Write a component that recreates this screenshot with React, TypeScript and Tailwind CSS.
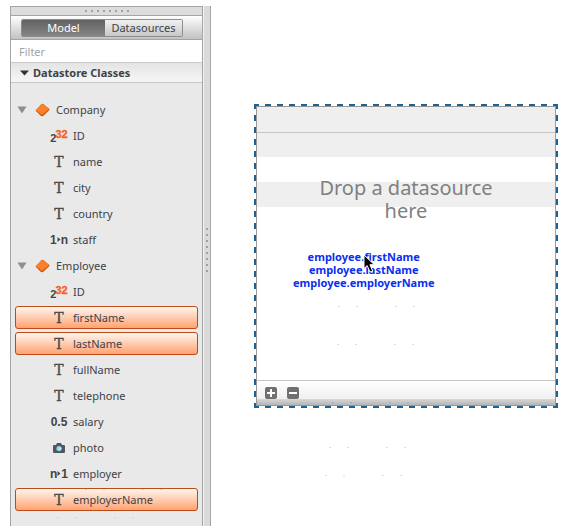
import { useState } from "react";

type Kind = "id" | "text" | "toMany" | "toOne" | "number" | "image";
type Field = { name: string; kind: Kind };
type Entity = { name: string; fields: Field[] };

const entities: Entity[] = [
  {
    name: "Company",
    fields: [
      { name: "ID", kind: "id" },
      { name: "name", kind: "text" },
      { name: "city", kind: "text" },
      { name: "country", kind: "text" },
      { name: "staff", kind: "toMany" },
    ],
  },
  {
    name: "Employee",
    fields: [
      { name: "ID", kind: "id" },
      { name: "firstName", kind: "text" },
      { name: "lastName", kind: "text" },
      { name: "fullName", kind: "text" },
      { name: "telephone", kind: "text" },
      { name: "salary", kind: "number" },
      { name: "photo", kind: "image" },
      { name: "employer", kind: "toOne" },
      { name: "employerName", kind: "text" },
    ],
  },
];

const dragged = ["firstName", "lastName", "employerName"];

function Arrow() {
  return (
    <svg width="4" height="5" viewBox="0 0 4 5" className="shrink-0">
      <path d="M0.5 0L3.5 2.5L0.5 5Z" fill="#444" />
    </svg>
  );
}

function KindIcon({ kind }: { kind: Kind }) {
  if (kind === "image") {
    return (
      <svg width="12" height="10" viewBox="0 0 12 10">
        <path d="M1 2H3L4 0H8L9 2H11Q12 2 12 3V9Q12 10 11 10H1Q0 10 0 9V3Q0 2 1 2Z" fill="#55565c" />
        <circle cx="6" cy="5.5" r="2.6" fill="#8fd6f2" />
        <circle cx="7" cy="5.5" r="1.2" fill="#c4ecfb" />
      </svg>
    );
  }
  if (kind === "text") {
    return <span className="font-['DejaVu_Serif',serif] text-[14px] leading-4 text-[#4a4a4a] [-webkit-text-stroke:0.4px_#4a4a4a]">T</span>;
  }
  return (
    <span className="flex items-center font-['Liberation_Sans',sans-serif] text-[12px] leading-4 font-bold text-[#444]">
      {kind === "number" && "0.5"}
      {kind === "id" && (
        <>
          <span className="pt-1 text-[11px] leading-3">2</span>
          <span className="-ml-px pb-1 text-[11px] leading-3 text-[#f2622d] [-webkit-text-stroke:0.3px_#f2622d]">32</span>
        </>
      )}
      {kind === "toMany" && (
        <>
          1<Arrow />n
        </>
      )}
      {kind === "toOne" && (
        <>
          n<Arrow />1
        </>
      )}
    </span>
  );
}

function EntityIcon() {
  return (
    <svg width="15" height="14" viewBox="0 0 15 14">
      <path d="M0.6 7.8L6.6 1L8 0.8L14.3 6L14.2 7.2L7.8 13.2L6 13Z" fill="#c4570f" />
      <path d="M0.6 7L7.4 0.8L14 6L7 12Z" fill="#ff7f27" />
    </svg>
  );
}

function FieldRow({ field }: { field: Field }) {
  const selected = dragged.includes(field.name);
  return (
    <li>
      <button
        type="button"
        aria-pressed={selected}
        className={`flex h-[23px] w-full items-center gap-[6px] rounded-[3px] border pl-[35px] text-left ${
          selected ? "border-[#bd4b18] bg-linear-to-b from-[#fff5ee] to-[#ffa270]" : "border-transparent"
        }`}
      >
        <span className="flex w-4 shrink-0 items-center justify-center">
          <KindIcon kind={field.kind} />
        </span>
        {field.name}
      </button>
    </li>
  );
}

function EntityGroup({ entity }: { entity: Entity }) {
  const [open, setOpen] = useState(true);
  return (
    <li className="flex flex-col gap-[3px]">
      <button
        type="button"
        aria-expanded={open}
        onClick={() => setOpen(!open)}
        className="flex h-[23px] w-full items-center gap-[6px] pl-[2px] text-left"
      >
        <svg width="10" height="8" viewBox="0 0 10 8" className="mr-[2px]">
          <path d="M0.5 0.5H9.5L5 7.5Z" fill="#8e8e8e" />
        </svg>
        <EntityIcon />
        {entity.name}
      </button>
      {open && (
        <ul className="flex flex-col gap-[3px]">
          {entity.fields.map((field) => (
            <FieldRow key={field.name} field={field} />
          ))}
        </ul>
      )}
    </li>
  );
}

const tabs = [
  { name: "Model", width: "w-[83px]" },
  { name: "Datasources", width: "flex-1" },
];

function Sidebar() {
  const [tab, setTab] = useState("Model");
  return (
    <aside className="w-[193px] shrink-0 border border-b-0 border-[#a5a5a5] bg-[#e9e9e9]">
      <div className="flex h-2 items-center justify-center gap-1 bg-[#dcdcdc]">
        {Array.from({ length: 8 }, (_, i) => (
          <span key={i} className="size-[2px] bg-[#a0a0a0]" />
        ))}
      </div>
      <div className="h-[25px] border-y border-[#a5a5a5] bg-linear-to-b from-white to-[#c2c2c2] pt-[3px] pr-[19px] pl-[10px]">
        <div role="tablist" className="flex h-[18px] overflow-hidden rounded-[2px] border border-[#8e8e8e]">
          {tabs.map(({ name, width }) => (
            <button
              key={name}
              type="button"
              role="tab"
              aria-selected={tab === name}
              onClick={() => setTab(name)}
              className={`h-full leading-4 ${width} ${
                tab === name
                  ? "bg-linear-to-b from-[#626262] to-[#858585] text-white"
                  : "bg-linear-to-b from-[#f1f1f1] to-[#c8c8c8]"
              }`}
            >
              {name}
            </button>
          ))}
        </div>
      </div>
      <input
        aria-label="Filter"
        placeholder="Filter"
        className="block h-[23px] w-full border-b border-[#cccccc] bg-white px-2 pt-px outline-none placeholder:text-[#a3a3a3]"
      />
      <h2 className="flex h-5 items-center gap-1 border-b border-[#c6c6c6] bg-linear-to-b from-[#e4e4e4] to-[#f6f6f6] pl-[9px] font-bold">
        <svg width="9" height="6" viewBox="0 0 9 6">
          <path d="M0 0.5H9L4.5 5.5Z" fill="#333" />
        </svg>
        Datastore Classes
      </h2>
      <ul className="flex flex-col gap-[3px] px-1 py-[15px]">
        {entities.map((entity) => (
          <EntityGroup key={entity.name} entity={entity} />
        ))}
      </ul>
    </aside>
  );
}

function Splitter() {
  return (
    <div role="separator" aria-orientation="vertical" className="flex w-2 shrink-0 flex-col items-center justify-center gap-1 border-r border-l border-r-[#a5a5a5] border-l-[#f2f2f2] bg-[#dadada] pb-8">
      {Array.from({ length: 8 }, (_, i) => (
        <span key={i} className="size-[2px] bg-[#a0a0a0]" />
      ))}
    </div>
  );
}

function GridButton({ label, plus }: { label: string; plus?: boolean }) {
  return (
    <button type="button" aria-label={label}>
      <svg width="12" height="12" viewBox="0 0 12 12">
        <rect width="12" height="12" rx="2" fill="#707070" />
        <path d={plus ? "M2 6H10M6 2V10" : "M2 6H10"} stroke="#fff" strokeWidth="2" />
      </svg>
    </button>
  );
}

const dashes =
  "bg-[repeating-linear-gradient(90deg,#1d6391_0_5px,#fff_5px_11px,#1d6391_11px_12px),repeating-linear-gradient(90deg,#1d6391_0_5px,#fff_5px_11px,#1d6391_11px_12px),repeating-linear-gradient(180deg,#1d6391_0_5px,#fff_5px_11px,#1d6391_11px_12px),repeating-linear-gradient(180deg,#1d6391_0_5px,#fff_5px_11px,#1d6391_11px_12px)] bg-[size:100%_2px,100%_2px,2px_100%,2px_100%] bg-[position:0_0,0_100%,0_0,100%_0] bg-no-repeat";

function DataGrid() {
  return (
    <section className={`relative p-[2px] ${dashes}`}>
      <div className="border border-[#999999] bg-white">
        <div className="h-[26px] border-b border-[#c6c6c6] bg-[#efefef]" />
        <div className="flex min-h-[247px] justify-center bg-[linear-gradient(#efefef_0_24px,#fff_24px_49px,#efefef_49px_74px,#fff_74px)] pt-[43px]">
          <p className="max-w-[200px] text-center text-[20px] leading-[23px] text-[#808080]">
            Drop a datasource here
          </p>
        </div>
        <div className="flex h-[19px] items-center gap-[10px] border-t border-[#c6c6c6] bg-linear-to-b from-white to-[#f0f0f0] pt-[6px] pl-2">
          <GridButton label="Add row" plus />
          <GridButton label="Remove row" />
        </div>
        <div className="h-[6px] bg-linear-to-b from-[#d9d9d9] to-[#b5b5b5]" />
      </div>
      <div className="absolute top-[146px] left-[39px] text-center leading-[13px] font-bold text-[#0a2ff0]">
        {dragged.map((name) => (
          <div key={name}>employee.{name}</div>
        ))}
      </div>
      <svg className="absolute top-[150px] left-[109px]" width="13" height="20" viewBox="0 0 13 20">
        <path d="M1 1V14.5L4.2 11.6L7 18L9.6 16.8L6.9 10.7H11.4Z" fill="#000" stroke="#fff" strokeWidth="1" />
      </svg>
    </section>
  );
}

const speckRows = [
  { x: 338, y: 306, color: "#d8d8fa" },
  { x: 337, y: 344, color: "#d8d8fa" },
  { x: 332, y: 402, color: "#a9aac4" },
  { x: 329, y: 447, color: "#dcdcdc" },
  { x: 325, y: 475, color: "#dcdcdc" },
  { x: 85, y: 489, color: "#cfe0c8" },
  { x: 57, y: 517, color: "#c8ddd2" },
];

function Specks() {
  return (
    <svg aria-hidden="true" className="pointer-events-none absolute top-0 left-0" width="430" height="530">
      {speckRows.map((row) =>
        [0, 18, 57, 75].map((dx) => (
          <rect key={`${row.y}-${dx}`} x={row.x + dx} y={row.y} width="2" height="1" fill={row.color} />
        )),
      )}
    </svg>
  );
}

export default function App() {
  return (
    <div className="relative flex bg-white pt-[6px] pb-[6px] pl-[10px] font-['Noto_Sans',sans-serif] text-[11px] leading-4 text-[#3e4247]">
      <Sidebar />
      <Splitter />
      <main className="min-w-0 flex-1 pt-[98px] pr-[22px] pl-[43px]">
        <DataGrid />
      </main>
      <Specks />
    </div>
  );
}
